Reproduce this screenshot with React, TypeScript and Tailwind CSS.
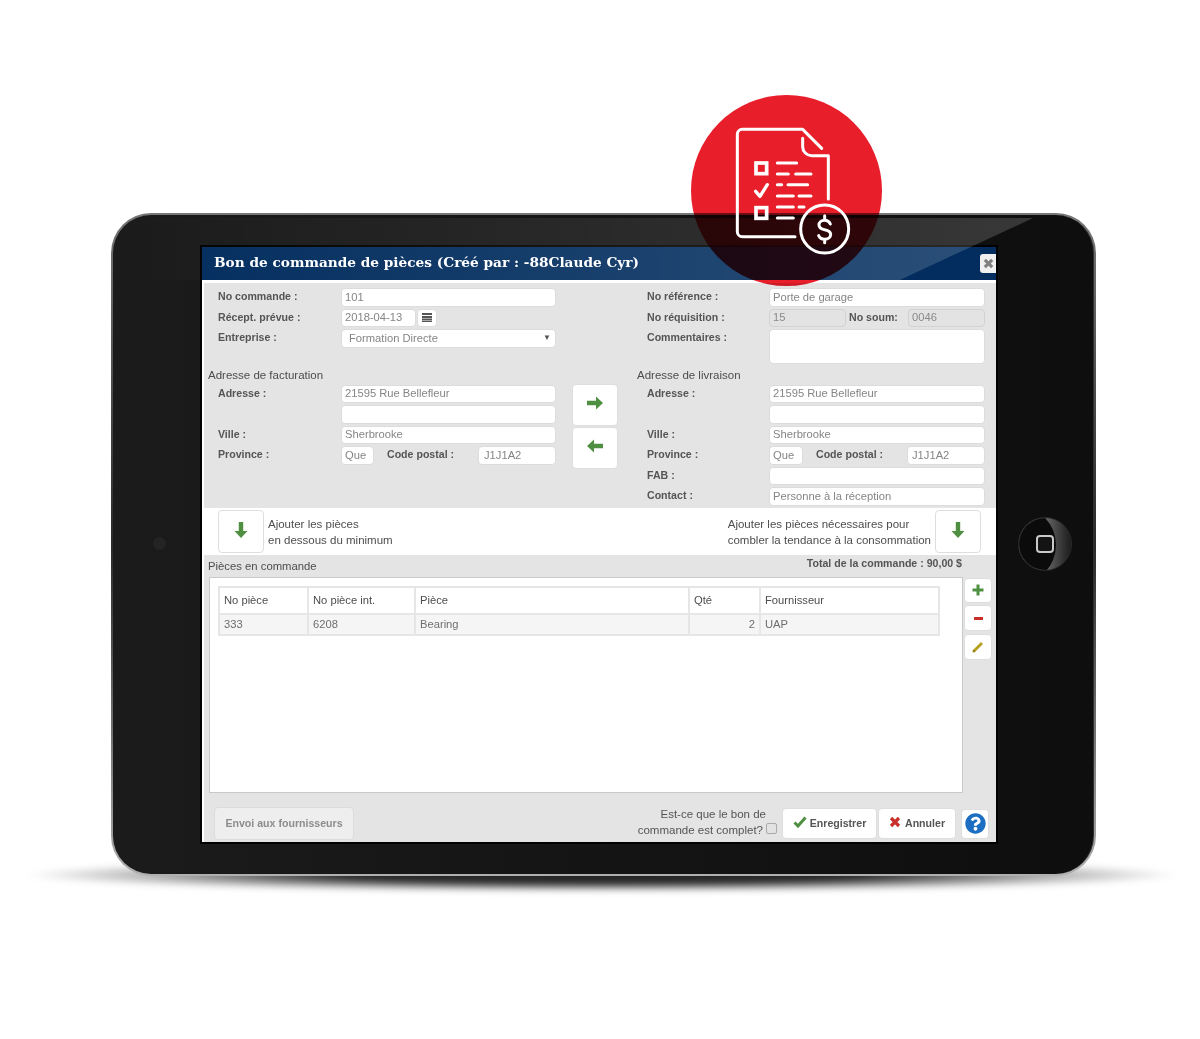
import type { ReactNode } from "react";
import { FaQuestionCircle } from "react-icons/fa";

const sans = "font-['Liberation_Sans',Arial,sans-serif]";

function ArrowRight({ flip = false }: { flip?: boolean }) {
  return (
    <svg viewBox="0 0 16 14" width="16" height="14" fill="#4f8f42" className={flip ? "rotate-180" : ""}>
      <path d="M0 4.800h9V0.500L16 7l-7 6.500V9.200H0z" />
    </svg>
  );
}

function ArrowDown() {
  return (
    <svg viewBox="0 0 14 16" width="14" height="16" fill="#4f8f42">
      <path d="M4.800 0h4.400v9h4.300L7 16 0.500 9h4.300z" />
    </svg>
  );
}

function Cross({ size, color, width, className = "" }: { size: number; color: string; width: number; className?: string }) {
  return (
    <svg viewBox="0 0 12 12" width={size} height={size} stroke={color} strokeWidth={width} className={className}>
      <path d="M2 2l8 8M10 2l-8 8" />
    </svg>
  );
}

function Field({ value = "", className = "w-[215px]", disabled = false }: { value?: string; className?: string; disabled?: boolean }) {
  return (
    <div
      className={`flex h-full items-center rounded-[4px] border px-[3px] text-[11.2px] whitespace-nowrap ${
        disabled ? "border-[#d2d2d2] bg-[#e3e3e3] text-[#8a8a8a]" : "border-[#dcdcdc] bg-white text-[#858585]"
      } ${className}`}
    >
      {value}
    </div>
  );
}

function Row({ label, labelWidth = "w-[123px]", children }: { label?: string; labelWidth?: string; children: ReactNode }) {
  return (
    <div className="flex h-[18.5px] items-center">
      <div className={`shrink-0 text-[10.6px] font-bold text-[#555] ${labelWidth}`}>{label}</div>
      {children}
    </div>
  );
}

function SectionTitle({ children, className }: { children: ReactNode; className: string }) {
  return <div className={`flex items-end pb-[1px] text-[11.5px] leading-[14px] text-[#4d4d4d] ${className}`}>{children}</div>;
}

function IconButton({ children, className = "" }: { children: ReactNode; className?: string }) {
  return (
    <div className={`flex shrink-0 items-center justify-center rounded-[4px] border border-[#dedede] bg-white ${className}`}>
      {children}
    </div>
  );
}

function OrderForm() {
  return (
    <div className="flex h-[224.5px] bg-[#e4e4e4]">
      {/* Facturation */}
      <div className="flex w-[362px] shrink-0 flex-col gap-[2px] pt-[5px]">
        <div className="flex flex-col gap-[2px] pl-[14px]">
          <Row label="No commande :">
            <Field value="101" />
          </Row>
          <Row label="Récept. prévue :">
            <Field value="2018-04-13" className="w-[75px]" />
            <IconButton className="ml-[1px] h-full w-[20px] pb-[2px]">
              <svg viewBox="0 0 10 10" width="10" height="10" fill="#555">
                <path d="M0 1h10v2H0zM0 4h10v6H0z" />
                <path d="M0 6h10v.6H0zM0 8h10v.6H0z" fill="#fff" />
              </svg>
            </IconButton>
          </Row>
          <Row label="Entreprise :">
            <div className="flex h-full w-[215px] items-center justify-between rounded-[4px] border border-[#dcdcdc] bg-white pr-[4px] pl-[7px] text-[11.2px] text-[#858585]">
              Formation Directe
              <span className="text-[8px] text-[#555]">▼</span>
            </div>
          </Row>
        </div>
        <SectionTitle className="h-[33px] pl-[4px]">Adresse de facturation</SectionTitle>
        <div className="flex flex-col gap-[2px] pl-[14px]">
          <Row label="Adresse :">
            <Field value="21595 Rue Bellefleur" />
          </Row>
          <Row>
            <Field />
          </Row>
          <Row label="Ville :">
            <Field value="Sherbrooke" />
          </Row>
          <Row label="Province :">
            <Field value="Que" className="w-[33px]" />
            <div className="w-[104px] shrink-0 pl-[13px] text-[10.6px] font-bold text-[#555]">Code postal :</div>
            <Field value="J1J1A2" className="w-[78px] pl-[5px]" />
          </Row>
        </div>
      </div>

      {/* Copier les adresses */}
      <div className="ml-[6px] flex w-[46px] shrink-0 flex-col gap-[1px] pt-[101px]">
        <IconButton className="h-[42px] w-[46px] pb-[4px]">
          <ArrowRight />
        </IconButton>
        <IconButton className="h-[42px] w-[46px] pb-[4px]">
          <ArrowRight flip />
        </IconButton>
      </div>

      {/* Livraison */}
      <div className="ml-[19px] flex w-[348px] shrink-0 flex-col gap-[2px] pt-[5px]">
        <div className="flex flex-col gap-[2px] pl-[10px]">
          <Row label="No référence :" labelWidth="w-[122px]">
            <Field value="Porte de garage" className="w-[216px]" />
          </Row>
          <Row label="No réquisition :" labelWidth="w-[122px]">
            <Field value="15" disabled className="w-[77px]" />
            <div className="w-[62px] shrink-0 pl-[3px] text-[10.6px] font-bold text-[#555]">No soum:</div>
            <Field value="0046" disabled className="w-[77px]" />
          </Row>
          <div className="flex h-[35px]">
            <div className="w-[122px] shrink-0 pt-[1px] text-[10.6px] font-bold text-[#555]">Commentaires :</div>
            <Field className="w-[216px]" />
          </div>
        </div>
        <SectionTitle className="h-[16.5px]">Adresse de livraison</SectionTitle>
        <div className="flex flex-col gap-[2px] pl-[10px]">
          <Row label="Adresse :" labelWidth="w-[122px]">
            <Field value="21595 Rue Bellefleur" className="w-[216px]" />
          </Row>
          <Row labelWidth="w-[122px]">
            <Field className="w-[216px]" />
          </Row>
          <Row label="Ville :" labelWidth="w-[122px]">
            <Field value="Sherbrooke" className="w-[216px]" />
          </Row>
          <Row label="Province :" labelWidth="w-[122px]">
            <Field value="Que" className="w-[34px]" />
            <div className="w-[104px] shrink-0 pl-[13px] text-[10.6px] font-bold text-[#555]">Code postal :</div>
            <Field value="J1J1A2" className="w-[78px] pl-[4px]" />
          </Row>
          <Row label="FAB :" labelWidth="w-[122px]">
            <Field className="w-[216px]" />
          </Row>
          <Row label="Contact :" labelWidth="w-[122px]">
            <Field value="Personne à la réception" className="w-[216px]" />
          </Row>
        </div>
      </div>
    </div>
  );
}

function AddPartsRow() {
  return (
    <div className="flex h-[47.5px] items-center bg-white pr-[15px] pl-[14px] text-[11.5px] leading-[16px] text-[#4d4d4d]">
      <IconButton className="h-[43px] w-[46px] pb-[2px]">
        <ArrowDown />
      </IconButton>
      <div className="ml-[4px] pt-[1px]">
        Ajouter les pièces
        <br />
        en dessous du minimum
      </div>
      <div className="mr-[4px] ml-auto pt-[1px]">
        Ajouter les pièces nécessaires pour
        <br />
        combler la tendance à la consommation
      </div>
      <IconButton className="h-[43px] w-[46px] pb-[2px]">
        <ArrowDown />
      </IconButton>
    </div>
  );
}

const columns = [
  { label: "No pièce", value: "333", width: "w-[89px]" },
  { label: "No pièce int.", value: "6208", width: "w-[107px]" },
  { label: "Pièce", value: "Bearing", width: "w-[274px]" },
  { label: "Qté", value: "2", width: "w-[71px]", right: true },
  { label: "Fournisseur", value: "UAP", width: "w-[179px]" },
];

function PartsTable() {
  return (
    <table className="w-[720px] table-fixed border-collapse text-[11.2px]">
      <thead>
        <tr className="h-[27px] bg-white">
          {columns.map((c) => (
            <th key={c.label} className={`border-2 border-[#e6e6e6] px-[4px] text-left font-normal text-[#4d4d4d] ${c.width}`}>
              {c.label}
            </th>
          ))}
        </tr>
      </thead>
      <tbody>
        <tr className="h-[21px] bg-[#f5f5f5]">
          {columns.map((c) => (
            <td key={c.label} className={`border-2 border-[#e6e6e6] px-[4px] text-[#6e6e6e] ${c.right ? "text-right" : "text-left"}`}>
              {c.value}
            </td>
          ))}
        </tr>
      </tbody>
    </table>
  );
}

function PartsSection() {
  return (
    <div className="flex flex-1 flex-col bg-[#e4e4e4]">
      <div className="flex h-[21.5px] shrink-0 justify-between pr-[34px] pl-[4px] text-[#4d4d4d]">
        <div className="pt-[4px] text-[11.3px] leading-[14px]">Pièces en commande</div>
        <div className="pt-[1px] text-[10.6px] leading-[14px] font-bold text-[#555]">Total de la commande : 90,00 $</div>
      </div>
      <div className="flex h-[216.5px] shrink-0 pl-[5px]">
        <div className="w-[754px] shrink-0 border border-[#c9c9c9] bg-white pt-[8px] pl-[8px]">
          <PartsTable />
        </div>
        <div className="ml-[1px] flex flex-col gap-[2.5px] pt-[1px]">
          <IconButton className="h-[25px] w-[28px]">
            <svg viewBox="0 0 12 12" width="12" height="12" fill="#4f8f42">
              <path d="M4.500 0.500h3v4h4v3h-4v4h-3v-4h-4v-3h4z" />
            </svg>
          </IconButton>
          <IconButton className="h-[26px] w-[28px]">
            <div className="h-[3px] w-[9px] bg-[#c9302c]" />
          </IconButton>
          <IconButton className="h-[26px] w-[28px]">
            <svg viewBox="0 0 12 12" width="12" height="12">
              <path d="M1.500 10.500L10 2" stroke="#b59f1c" strokeWidth="2.800" />
              <path d="M0.500 11.500l0.700-3 2.300 2.300z" fill="#8c7a14" />
            </svg>
          </IconButton>
        </div>
      </div>
      <div className="flex flex-1 items-start pt-[14.5px] pr-[7px] pl-[10px]">
        <div className="-mt-px flex h-[33px] w-[140px] items-center justify-center rounded-[4px] border border-[#dcdcdc] bg-[#eeeeee] pt-[1px] text-[10.6px] font-bold text-[#8c8c8c]">
          Envoi aux fournisseurs
        </div>
        <div className="-mt-[2px] ml-auto text-right text-[11.5px] leading-[16px] text-[#555]">
          <div className="-mr-[3px]">Est-ce que le bon de</div>
          <div>commande est complet?</div>
        </div>
        <div className="mt-[15px] mr-[5px] ml-[3px] h-[11px] w-[11px] rounded-[2px] border border-[#aaa] bg-[#e2e2e2]" />
        <div className="flex h-[31px] w-[95px] items-center justify-center gap-[3px] rounded-[4px] border border-[#dedede] bg-white pt-[1px] text-[10.6px] font-bold text-[#555]">
          <svg viewBox="0 0 14 12" width="14" height="12" fill="none" stroke="#4f8f42" strokeWidth="3" className="-mt-[3px]">
            <path d="M1.500 6.500l3.500 3.500 7.500-8.500" />
          </svg>
          Enregistrer
        </div>
        <div className="ml-[1px] flex h-[31px] w-[78px] items-center justify-center gap-[4px] rounded-[4px] border border-[#dedede] bg-white pt-[1px] text-[10.6px] font-bold text-[#555]">
          <Cross size={12} color="#c9302c" width={3.2} className="-mt-[3px]" />
          Annuler
        </div>
        <div className="mt-[1px] ml-[5px] flex h-[30px] w-[28px] items-center justify-center rounded-[4px] border border-[#dedede] bg-white">
          <FaQuestionCircle className="text-[21px] text-[#1b6ec2]" />
        </div>
      </div>
    </div>
  );
}

function Screen() {
  return (
    <div className={`flex h-[599px] w-[798px] shrink-0 flex-col border-2 border-black bg-white blur-[0.5px] ${sans}`}>
      <div className="flex h-[33px] shrink-0 items-center justify-between bg-[#022d5e] pl-[12px]">
        <div className="-mt-[2px] font-['DejaVu_Serif',serif] text-[13.7px] font-bold text-white">
          Bon de commande de pièces (Créé par : -88Claude Cyr)
        </div>
        <div className="flex h-[19px] w-[16px] items-center justify-center rounded-l-[3px] bg-[#f0f0f0]">
          <Cross size={11} color="#808080" width={3.4} />
        </div>
      </div>
      <div className="flex flex-1 flex-col pt-[3px] pl-[2px]">
        <OrderForm />
        <AddPartsRow />
        <PartsSection />
      </div>
    </div>
  );
}

function HomeButton() {
  return (
    <div className="relative flex h-[54px] w-[54px] items-center justify-center overflow-hidden rounded-full border border-[#2a2a2a] bg-gradient-to-r from-[#7d7d7d] via-[#6a6a6a] to-[#1d1d1d]">
      <div className="absolute top-[-12px] left-[-41px] h-[78px] w-[78px] rounded-full bg-[#0b0b0b]" />
      <div className="relative h-[18px] w-[18px] rounded-[4px] border-2 border-[#c9c9c9] bg-[#1a1a1a]/60" />
    </div>
  );
}

function BadgeIcon() {
  return (
    <svg viewBox="0 0 960 645" width="320" height="215" fill="none" stroke="#fff" strokeWidth="9" strokeLinecap="round" strokeLinejoin="round" className="pointer-events-none absolute top-[85px] left-[680px]">
      <path d="M345 455H187a15 15 0 0 1-15-15V148a15 15 0 0 1 15-15H368l57 57" />
      <path d="M368 160v25a27 27 0 0 0 27 27h50v130" />
      <rect x="228" y="234" width="32" height="32" strokeWidth="11" strokeLinejoin="miter" />
      <rect x="228" y="368" width="32" height="32" strokeWidth="11" strokeLinejoin="miter" />
      <path d="M227 319l13 15 22-35" strokeWidth="10" />
      <path d="M292 234h58M292 267h33M347 267h46M292 299h13M324 299h59M292 333h48M357 333h36M292 366h48M357 366h15M292 399h48" />
      <circle cx="434" cy="432" r="72" />
      <path d="M451 417c-3-7-9-11-17-11-10 0-17 6-17 14 0 9 7 12 17 14 10 2 18 5 18 14s-7 15-18 15c-9 0-15-4-18-11M434 392v12M434 463v10" />
    </svg>
  );
}

export default function App() {
  return (
    <div className="relative h-[1039px] w-[1200px] overflow-hidden bg-white pt-[213px] pl-[111px]">
      {/* ombre sous la tablette */}
      <div className="absolute top-[858px] left-[25px] h-[34px] w-[1155px] rounded-[50%] bg-[radial-gradient(closest-side,rgba(0,0,0,0.85)_45%,rgba(0,0,0,0.35)_75%,rgba(0,0,0,0)_100%)] blur-[3px]" />

      <div className="relative h-[663px] w-[985px] rounded-[40px] bg-gradient-to-b from-[#777] via-[#2a2a2a] to-[#b0b0b0] p-[2px]">
        <div className="flex h-[659px] items-start rounded-[38px] border-r border-[#2e2e2e] bg-gradient-to-r from-[#1b1b1b] to-[#0e0e0e] pt-[30px] pl-[87px]">
          <div className="mt-[292px] mr-[34px] -ml-[47px] h-[13px] w-[13px] shrink-0 rounded-full bg-[#242424]" />
          <Screen />
          <div className="mt-[272px] ml-[20px] shrink-0">
            <HomeButton />
          </div>
        </div>
      </div>

      {/* reflet */}
      <div className="pointer-events-none absolute top-[218px] left-[114px] h-[62px] w-[919px] bg-gradient-to-r from-white/0 to-white/[0.17] [clip-path:polygon(0_0,100%_0,85.5%_100%,0_100%)]" />

      {/* pastille rouge */}
      <div className="absolute top-[95px] left-[691px] h-[191px] w-[191px] rounded-full bg-[#e81e2b] mix-blend-multiply" />
      <BadgeIcon />
    </div>
  );
}
